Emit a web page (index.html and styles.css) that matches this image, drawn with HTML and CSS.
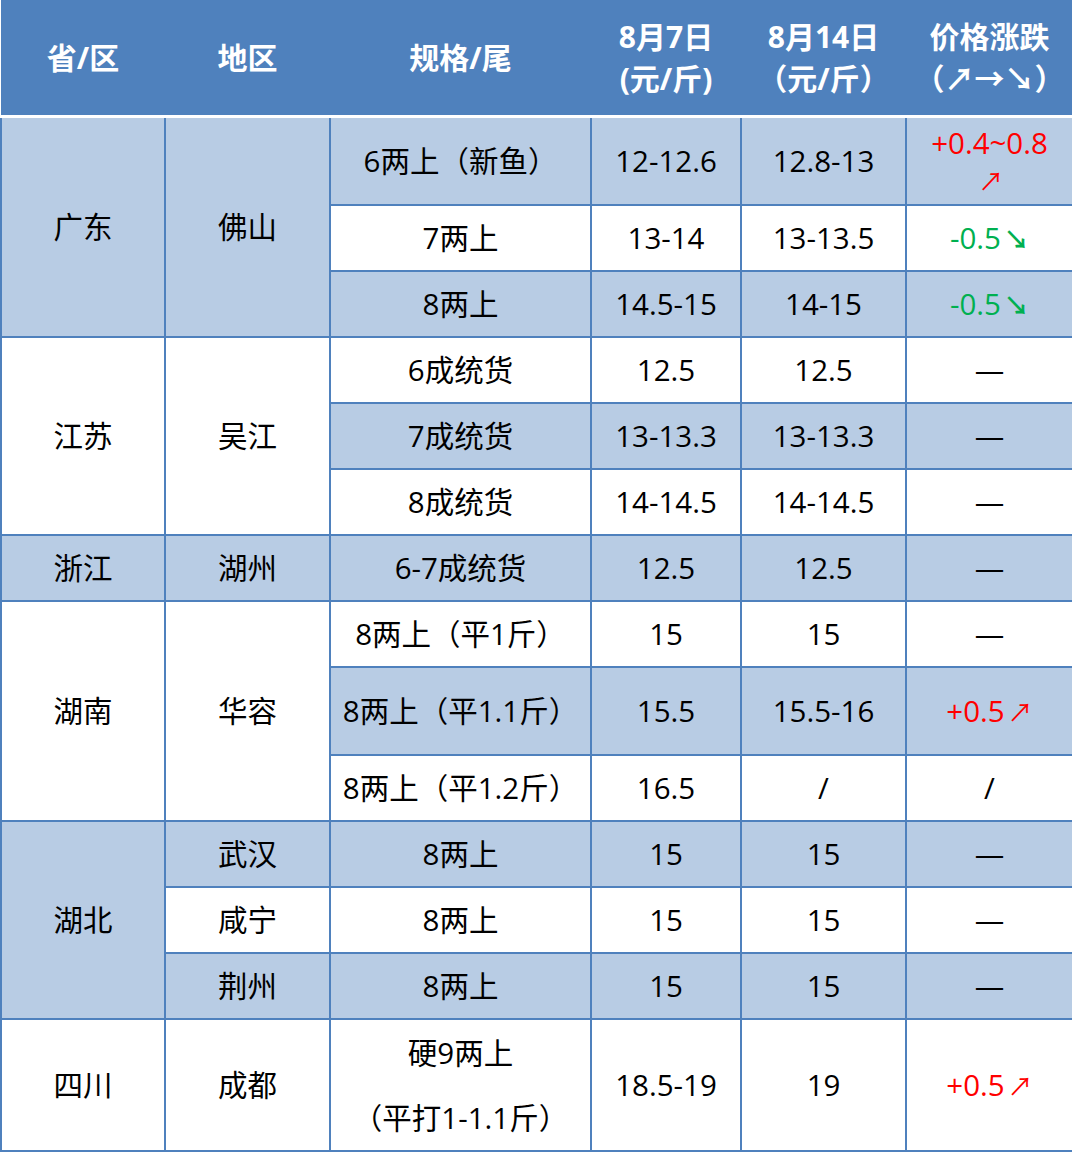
FILE: index.html
```html
<!DOCTYPE html>
<html lang="zh">
<head>
<meta charset="utf-8">
<link rel="stylesheet" href="styles.css">
</head>
<body>
<table class="price">
  <colgroup>
    <col class="c1"><col class="c2"><col class="c3"><col class="c4"><col class="c5"><col class="c6">
  </colgroup>
  <thead>
    <tr>
      <th>省/区</th>
      <th>地区</th>
      <th>规格/尾</th>
      <th><div class="hl">8月7日</div><div class="hl">(元/斤)</div></th>
      <th><div class="hl">8月14日</div><div class="hl">（元/斤）</div></th>
      <th><div class="hl">价格涨跌</div><div class="hl">（↗→↘）</div></th>
    </tr>
  </thead>
  <tbody>
    <tr class="tall">
      <td rowspan="3" class="b">广东</td>
      <td rowspan="3" class="b">佛山</td>
      <td class="b">6两上（新鱼）</td>
      <td class="b">12-12.6</td>
      <td class="b">12.8-13</td>
      <td class="b up wrap"><div class="l1">+0.4~0.8</div><div class="l2"><span class="arr">↗</span></div></td>
    </tr>
    <tr>
      <td>7两上</td><td>13-14</td><td>13-13.5</td><td class="down">-0.5<span class="arr">↘</span></td>
    </tr>
    <tr>
      <td class="b">8两上</td><td class="b">14.5-15</td><td class="b">14-15</td><td class="b down">-0.5<span class="arr">↘</span></td>
    </tr>
    <tr>
      <td rowspan="3">江苏</td>
      <td rowspan="3">吴江</td>
      <td>6成统货</td><td>12.5</td><td>12.5</td><td>—</td>
    </tr>
    <tr>
      <td class="b">7成统货</td><td class="b">13-13.3</td><td class="b">13-13.3</td><td class="b">—</td>
    </tr>
    <tr>
      <td>8成统货</td><td>14-14.5</td><td>14-14.5</td><td>—</td>
    </tr>
    <tr>
      <td class="b">浙江</td><td class="b">湖州</td><td class="b">6-7成统货</td><td class="b">12.5</td><td class="b">12.5</td><td class="b">—</td>
    </tr>
    <tr>
      <td rowspan="3">湖南</td>
      <td rowspan="3">华容</td>
      <td>8两上（平1斤）</td><td>15</td><td>15</td><td>—</td>
    </tr>
    <tr class="tall">
      <td class="b">8两上（平1.1斤）</td><td class="b">15.5</td><td class="b">15.5-16</td><td class="b up">+0.5<span class="arr">↗</span></td>
    </tr>
    <tr>
      <td>8两上（平1.2斤）</td><td>16.5</td><td>/</td><td>/</td>
    </tr>
    <tr>
      <td rowspan="3" class="b">湖北</td>
      <td class="b">武汉</td><td class="b">8两上</td><td class="b">15</td><td class="b">15</td><td class="b">—</td>
    </tr>
    <tr>
      <td>咸宁</td><td>8两上</td><td>15</td><td>15</td><td>—</td>
    </tr>
    <tr>
      <td class="b">荆州</td><td class="b">8两上</td><td class="b">15</td><td class="b">15</td><td class="b">—</td>
    </tr>
    <tr class="last">
      <td>四川</td><td>成都</td>
      <td class="wrap"><div class="p1">硬9两上</div><div class="p2">（平打1-1.1斤）</div></td>
      <td>18.5-19</td><td>19</td><td class="up">+0.5<span class="arr">↗</span></td>
    </tr>
  </tbody>
</table>
</body>
</html>
```

FILE: styles.css
```css
html, body {
  margin: 0;
  padding: 0;
  background: #ffffff;
}

.price {
  width: 1072px;
  border-collapse: collapse;
  table-layout: fixed;
  font-family: "Open Sans", "Noto Sans CJK SC", sans-serif;
  font-size: 29.5px;
  color: #000000;
}

.c1 { width: 164px; }
.c2 { width: 165px; }
.c3 { width: 261px; }
.c4 { width: 150px; }
.c5 { width: 165px; }
.c6 { width: 167px; }

.price th {
  background: #4f81bd;
  color: #ffffff;
  font-weight: bold;
  font-size: 30px;
  height: 115px;
  padding: 0;
  border: none;
  border-bottom: 3px solid #ffffff;
  text-align: center;
  vertical-align: middle;
  line-height: 42px;
  font-family: "Open Sans", "Noto Sans CJK SC", sans-serif;
}

.price th .hl {
  line-height: 42px;
}

.price td {
  border: 2px solid #4f81bd;
  height: 64px;
  padding: 0;
  text-align: center;
  vertical-align: middle;
  line-height: 36px;
  background: #ffffff;
}

.price td.b {
  background: #b8cce4;
}

.price tr.tall td {
  height: 86px;
}

.price tr.last td {
  height: 129px;
}

.up { color: #ff0000; }
.down { color: #00b050; }

.arr {
  font-family: "Noto Sans CJK SC", sans-serif;
  font-size: 25px;
  margin-left: 3px;
}

.down .arr {
  font-weight: bold;
}

.wrap .l1,
.wrap .l2 {
  line-height: 37px;
}

.wrap .p1,
.wrap .p2 {
  line-height: 65px;
}
```
